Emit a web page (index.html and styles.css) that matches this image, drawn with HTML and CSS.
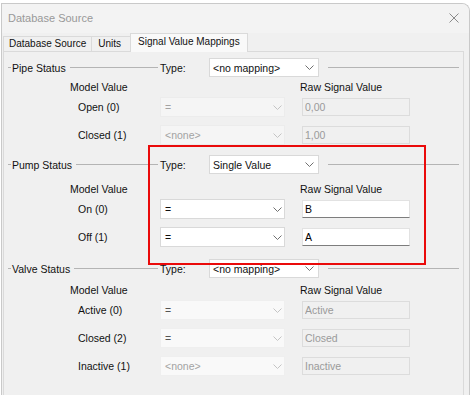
FILE: index.html
```html
<!DOCTYPE html>
<html lang="en">
<head>
    <meta charset="UTF-8">
    <meta name="viewport" content="width=device-width, initial-scale=1.0">
    <title>Database Source</title>
    <link rel="stylesheet" href="styles.css">
</head>
<body>
    <div class="window">
        <div class="titlebar">
            <span class="title">Database Source</span>
            <svg class="close" width="10" height="10" viewBox="0 0 10 10">
                <path d="M0.5 0.5L9.5 9.5M9.5 0.5L0.5 9.5" />
            </svg>
        </div>

        <div class="tabs">
            <div class="tab tab-first">Database Source</div>
            <div class="tab tab-units">Units</div>
            <div class="tab active">Signal Value Mappings</div>
        </div>

        <div class="page">
            <!-- Pipe Status -->
            <section class="group group-pipe">
                <div class="group-head">
                    <div class="legend">
                        <span class="dash"></span>
                        <span class="legend-text">Pipe Status</span>
                        <span class="rule"></span>
                    </div>
                    <span class="type-label">Type:</span>
                    <div class="combo combo-type">
                        <span>&lt;no mapping&gt;</span>
                        <svg viewBox="0 0 9 5"><polyline points="0.5,0.5 4.5,4.5 8.5,0.5" /></svg>
                    </div>
                    <span class="rule rule-end"></span>
                </div>
                <div class="col-head">
                    <span class="col-model">Model Value</span>
                    <span>Raw Signal Value</span>
                </div>
                <div class="row">
                    <span class="row-label">Open (0)</span>
                    <div class="combo combo-value is-disabled">
                        <span>=</span>
                        <svg viewBox="0 0 9 5"><polyline points="0.5,0.5 4.5,4.5 8.5,0.5" /></svg>
                    </div>
                    <input class="raw is-disabled" type="text" value="0,00" readonly>
                </div>
                <div class="row">
                    <span class="row-label">Closed (1)</span>
                    <div class="combo combo-value is-disabled">
                        <span>&lt;none&gt;</span>
                        <svg viewBox="0 0 9 5"><polyline points="0.5,0.5 4.5,4.5 8.5,0.5" /></svg>
                    </div>
                    <input class="raw is-disabled" type="text" value="1,00" readonly>
                </div>
            </section>

            <!-- Pump Status -->
            <section class="group group-pump">
                <div class="group-head">
                    <div class="legend">
                        <span class="dash"></span>
                        <span class="legend-text">Pump Status</span>
                        <span class="rule"></span>
                    </div>
                    <span class="type-label">Type:</span>
                    <div class="combo combo-type">
                        <span>Single Value</span>
                        <svg viewBox="0 0 9 5"><polyline points="0.5,0.5 4.5,4.5 8.5,0.5" /></svg>
                    </div>
                    <span class="rule rule-end"></span>
                </div>
                <div class="col-head">
                    <span class="col-model">Model Value</span>
                    <span>Raw Signal Value</span>
                </div>
                <div class="row">
                    <span class="row-label">On (0)</span>
                    <div class="combo combo-value">
                        <span>=</span>
                        <svg viewBox="0 0 9 5"><polyline points="0.5,0.5 4.5,4.5 8.5,0.5" /></svg>
                    </div>
                    <input class="raw" type="text" value="B">
                </div>
                <div class="row">
                    <span class="row-label">Off (1)</span>
                    <div class="combo combo-value">
                        <span>=</span>
                        <svg viewBox="0 0 9 5"><polyline points="0.5,0.5 4.5,4.5 8.5,0.5" /></svg>
                    </div>
                    <input class="raw" type="text" value="A">
                </div>
            </section>

            <!-- Valve Status -->
            <section class="group group-valve">
                <div class="group-head">
                    <div class="legend">
                        <span class="dash"></span>
                        <span class="legend-text">Valve Status</span>
                        <span class="rule"></span>
                    </div>
                    <span class="type-label">Type:</span>
                    <div class="combo combo-type">
                        <span>&lt;no mapping&gt;</span>
                        <svg viewBox="0 0 9 5"><polyline points="0.5,0.5 4.5,4.5 8.5,0.5" /></svg>
                    </div>
                    <span class="rule rule-end"></span>
                </div>
                <div class="col-head">
                    <span class="col-model">Model Value</span>
                    <span>Raw Signal Value</span>
                </div>
                <div class="row">
                    <span class="row-label">Active (0)</span>
                    <div class="combo combo-value is-readonly">
                        <span>=</span>
                        <svg viewBox="0 0 9 5"><polyline points="0.5,0.5 4.5,4.5 8.5,0.5" /></svg>
                    </div>
                    <input class="raw is-disabled" type="text" value="Active" readonly>
                </div>
                <div class="row">
                    <span class="row-label">Closed (2)</span>
                    <div class="combo combo-value is-readonly">
                        <span>=</span>
                        <svg viewBox="0 0 9 5"><polyline points="0.5,0.5 4.5,4.5 8.5,0.5" /></svg>
                    </div>
                    <input class="raw is-disabled" type="text" value="Closed" readonly>
                </div>
                <div class="row">
                    <span class="row-label">Inactive (1)</span>
                    <div class="combo combo-value is-readonly">
                        <span class="placeholder">&lt;none&gt;</span>
                        <svg viewBox="0 0 9 5"><polyline points="0.5,0.5 4.5,4.5 8.5,0.5" /></svg>
                    </div>
                    <input class="raw is-disabled" type="text" value="Inactive" readonly>
                </div>
            </section>
        </div>
    </div>

    <div class="highlight"></div>
</body>
</html>
```

FILE: styles.css
```css
html,
body {
    margin: 0;
    height: 100%;
    overflow: hidden;
    background-color: #ffffff;
}

body {
    position: relative;
    font-family: 'Liberation Sans', Arial, sans-serif;
    font-size: 10.5px;
    color: #111;
}

.window {
    display: flex;
    flex-direction: column;
    box-sizing: border-box;
    width: 469px;
    height: 392px;
    margin: 3px 0 0 1px;
    border: 1px solid #c9c9c9;
    border-bottom: none;
    border-top-right-radius: 8px;
    background-color: #f0f0f0;
    overflow: hidden;
}

/* title bar */
.titlebar {
    display: flex;
    align-items: center;
    justify-content: space-between;
    height: 27px;
    padding: 0 10px 2px 6px;
    background-color: #f3f3f3;
}

.title {
    font-size: 11px;
    color: #999;
}

.close path {
    stroke: #8a8a8a;
    stroke-width: 1;
    fill: none;
}

/* tabs */
.tabs {
    display: flex;
    align-items: flex-end;
    height: 18px;
    padding-left: 1px;
    position: relative;
    z-index: 1;
}

.tab {
    height: 14px;
    line-height: 14px;
    padding: 0 5px;
    font-size: 10px;
    border: 1px solid #dadada;
    border-bottom: none;
    border-left: none;
    background-color: #f0f0f0;
}

.tab-first {
    border-left: 1px solid #dadada;
}

.tab-units {
    padding: 0 9px 0 6px;
}

.tab.active {
    height: 18px;
    line-height: 16px;
    padding: 0 7px;
    margin: 0 0 -1px -1px;
    border-left: 1px solid #dadada;
    background-color: #f9f9f9;
}

/* tab page */
.page {
    flex: 1;
    margin: 0 5px 0 1px;
    padding: 6px 4px 0;
    border: 1px solid #dadada;
    border-bottom: none;
    background-color: #f0f0f0;
}

.group + .group {
    margin-top: 10px;
}

.group-valve {
    margin-top: 12px !important;
}

.group-head {
    display: flex;
    align-items: center;
    height: 19px;
}

.legend {
    display: flex;
    align-items: center;
    flex: 0 0 150px;
}

.dash {
    width: 3px;
    border-top: 1px solid #b4b4b4;
}

.legend-text {
    padding: 0 4px 0 1px;
}

.rule {
    flex: 1;
    border-top: 1px solid #b4b4b4;
}

.rule-end {
    margin-left: 9px;
}

.type-label {
    width: 49px;
    padding-left: 2px;
}

.col-head {
    display: flex;
    line-height: 13px;
    margin: 6px 0 3px 62px;
}

.group-pipe .col-head {
    margin-top: 4px;
}

.group-pump .col-head {
    margin-top: 9px;
}

.col-model {
    width: 230px;
}

.row {
    display: flex;
    align-items: center;
    height: 20px;
}

.row + .row {
    margin-top: 8px;
}

.row-label {
    width: 82px;
    margin-left: 70px;
}

/* combo boxes */
.combo {
    display: flex;
    align-items: center;
    justify-content: space-between;
    box-sizing: border-box;
    height: 20px;
    padding: 0 2px 0 4px;
    border: 1px solid #d9d9d9;
    background-color: #ffffff;
}

.combo svg {
    width: 9px;
    height: 5px;
}

.combo polyline {
    fill: none;
    stroke: #707070;
    stroke-width: 1;
}

.combo-type {
    width: 110px;
    height: 19px;
    padding: 0 4px 0 3px;
}

.combo-value {
    width: 125px;
}

.combo.is-disabled {
    background-color: #f5f5f5;
    border-color: #ececec;
    color: #a3a3a3;
}

.combo.is-readonly {
    background-color: #f9f9f9;
    border-color: #efefef;
    color: #555;
}

.combo.is-disabled polyline,
.combo.is-readonly polyline {
    stroke: #c4c4c4;
}

.placeholder {
    color: #a3a3a3;
}

/* raw value inputs */
.raw {
    box-sizing: border-box;
    width: 108px;
    height: 18px;
    margin: 0 0 0 17px;
    padding: 0 2px;
    font: inherit;
    color: #000;
    border: 1px solid #e2e2e2;
    border-bottom-color: #7d7d7d;
    background-color: #ffffff;
    outline: none;
}

.raw.is-disabled {
    color: #9a9a9a;
    border-color: #dcdcdc;
    background-color: #f0f0f0;
}

/* red annotation frame */
.highlight {
    position: absolute;
    left: 148px;
    top: 145px;
    width: 278px;
    height: 120px;
    box-sizing: border-box;
    border: 2px solid #ea0a0a;
}
```
